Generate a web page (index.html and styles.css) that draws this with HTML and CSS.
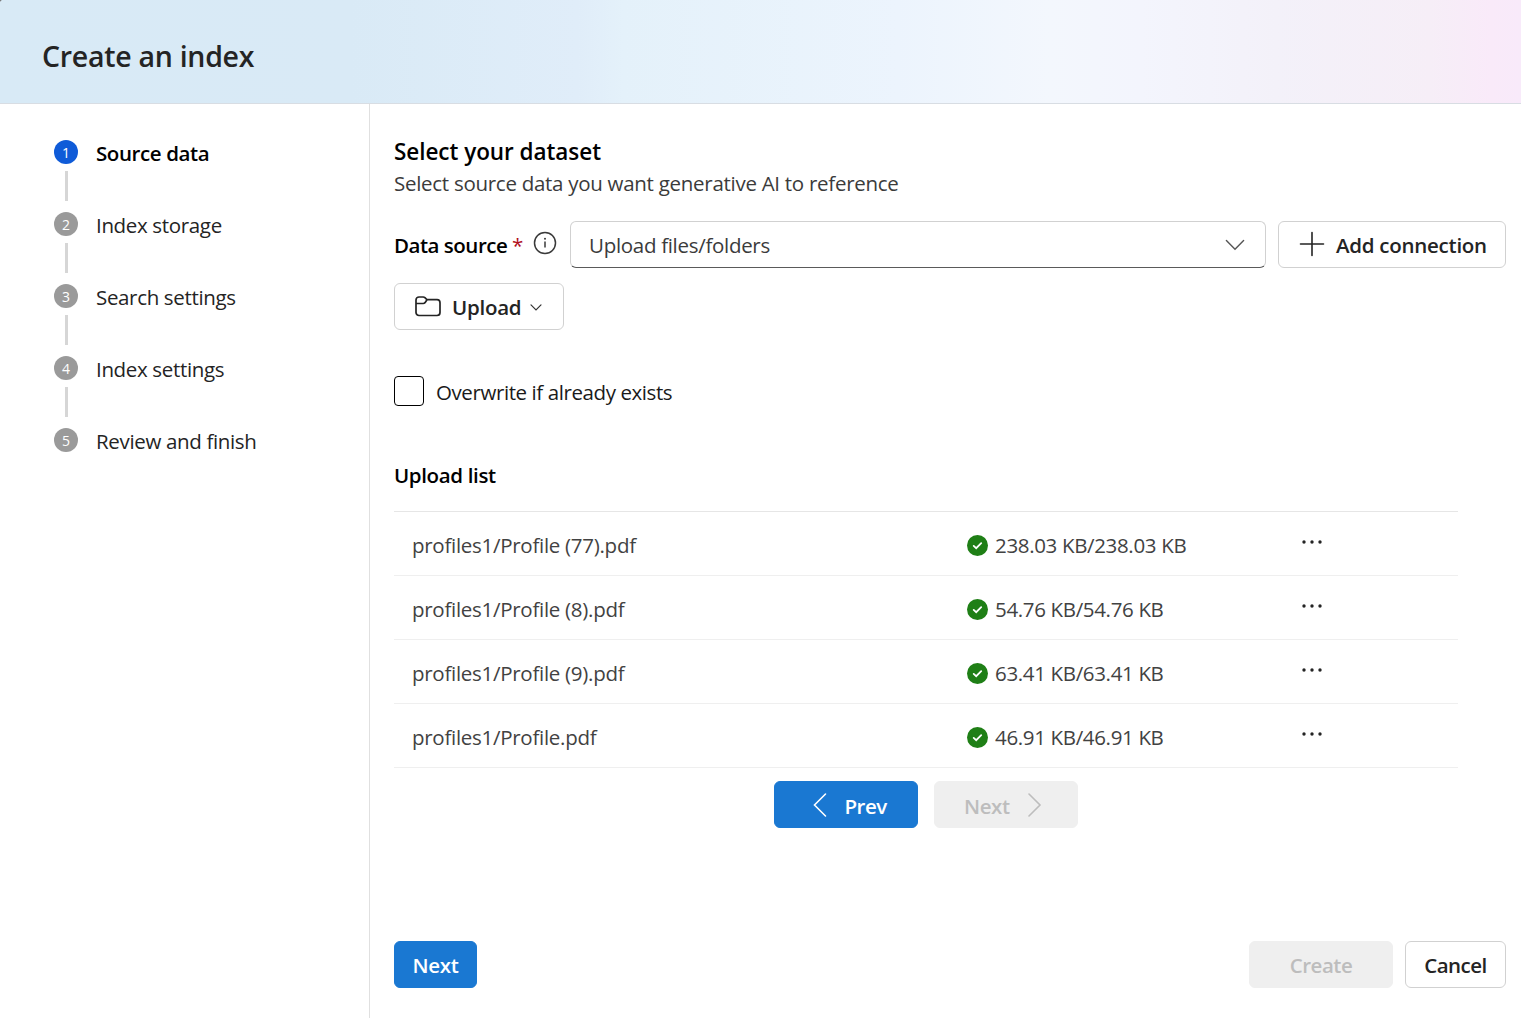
FILE: index.html
```html
<!DOCTYPE html>
<html lang="en">
<head>
<meta charset="utf-8">
<title>Create an index</title>
<link rel="stylesheet" href="styles.css">
</head>
<body>
<header class="header"><h1 class="title">Create an index</h1></header>
<div class="body">
  <nav class="steps">
    <div class="step active"><div class="rail"><span class="dot">1</span><i class="line"></i></div><span class="step-name">Source data</span></div>
    <div class="step"><div class="rail"><span class="dot">2</span><i class="line"></i></div><span class="step-name">Index storage</span></div>
    <div class="step"><div class="rail"><span class="dot">3</span><i class="line"></i></div><span class="step-name">Search settings</span></div>
    <div class="step"><div class="rail"><span class="dot">4</span><i class="line"></i></div><span class="step-name">Index settings</span></div>
    <div class="step"><div class="rail"><span class="dot">5</span></div><span class="step-name">Review and finish</span></div>
  </nav>
  <main class="main">
    <h2 class="heading">Select your dataset</h2>
    <p class="sub">Select source data you want generative AI to reference</p>
    <div class="source">
      <label class="label">Data source</label><span class="req">*</span>
      <svg class="info" width="24" height="24" viewBox="0 0 24 24" fill="none" stroke="#3a3a3a" stroke-width="1.5"><circle cx="12" cy="12" r="10.5"/><path d="M12 10.5v6"/><circle cx="12" cy="7.8" r="1" fill="#3a3a3a" stroke="none"/></svg>
      <div class="select"><span>Upload files/folders</span><svg width="20" height="12" viewBox="0 0 20 12" fill="none" stroke="#555" stroke-width="1.4" stroke-linecap="round"><path d="M1.4 1.6 10 10.2l8.6-8.6"/></svg></div>
      <button class="btn add"><svg width="26" height="26" viewBox="0 0 26 26" stroke="#242424" stroke-width="1.6" stroke-linecap="round"><path d="M13 1.5v23M1.5 13h23"/></svg><span>Add connection</span></button>
    </div>
    <button class="btn upload"><svg width="28" height="22" viewBox="0 0 28 22" fill="none" stroke="#242424" stroke-width="1.7" stroke-linejoin="round"><path d="M2 4a3 3 0 0 1 3-3h4.2a2.5 2.5 0 0 1 1.700.7l2 2H23a3 3 0 0 1 3 3V16.500a3 3 0 0 1-3 3H5a3 3 0 0 1-3-3zM2 7.500h7.200a2.500 2.500 0 0 0 1.800-.8l2-3"/></svg><span>Upload</span><svg class="mini" width="12" height="8" viewBox="0 0 12 8" fill="none" stroke="#333" stroke-width="1.2" stroke-linecap="round"><path d="M1 1.800 6 6.800l5-5"/></svg></button>
    <label class="check"><i class="box"></i><span>Overwrite if already exists</span></label>
    <h3 class="list-title">Upload list</h3>
    <div class="table">
      <div class="row"><span class="file">profiles1/Profile (77).pdf</span><svg class="ok" width="22" height="22" viewBox="0 0 22 22"><circle cx="11.5" cy="11.5" r="10.5" fill="#1f7f16"/><path d="m7.700 11.900 2.500 2.300 5-5" fill="none" stroke="#fff" stroke-width="1.8" stroke-linecap="round"/></svg><span class="size">238.03 KB/238.03 KB</span><svg class="more" width="20" height="4" viewBox="0 0 20 4" fill="#242424"><circle cx="2" cy="2" r="1.7"/><circle cx="10" cy="2" r="1.7"/><circle cx="18" cy="2" r="1.7"/></svg></div>
      <div class="row"><span class="file">profiles1/Profile (8).pdf</span><svg class="ok" width="22" height="22" viewBox="0 0 22 22"><circle cx="11.5" cy="11.5" r="10.5" fill="#1f7f16"/><path d="m7.700 11.900 2.500 2.300 5-5" fill="none" stroke="#fff" stroke-width="1.8" stroke-linecap="round"/></svg><span class="size">54.76 KB/54.76 KB</span><svg class="more" width="20" height="4" viewBox="0 0 20 4" fill="#242424"><circle cx="2" cy="2" r="1.7"/><circle cx="10" cy="2" r="1.7"/><circle cx="18" cy="2" r="1.7"/></svg></div>
      <div class="row"><span class="file">profiles1/Profile (9).pdf</span><svg class="ok" width="22" height="22" viewBox="0 0 22 22"><circle cx="11.5" cy="11.5" r="10.5" fill="#1f7f16"/><path d="m7.700 11.900 2.500 2.300 5-5" fill="none" stroke="#fff" stroke-width="1.8" stroke-linecap="round"/></svg><span class="size">63.41 KB/63.41 KB</span><svg class="more" width="20" height="4" viewBox="0 0 20 4" fill="#242424"><circle cx="2" cy="2" r="1.7"/><circle cx="10" cy="2" r="1.7"/><circle cx="18" cy="2" r="1.7"/></svg></div>
      <div class="row"><span class="file">profiles1/Profile.pdf</span><svg class="ok" width="22" height="22" viewBox="0 0 22 22"><circle cx="11.5" cy="11.5" r="10.5" fill="#1f7f16"/><path d="m7.700 11.900 2.500 2.300 5-5" fill="none" stroke="#fff" stroke-width="1.8" stroke-linecap="round"/></svg><span class="size">46.91 KB/46.91 KB</span><svg class="more" width="20" height="4" viewBox="0 0 20 4" fill="#242424"><circle cx="2" cy="2" r="1.7"/><circle cx="10" cy="2" r="1.7"/><circle cx="18" cy="2" r="1.7"/></svg></div>
    </div>
    <div class="pager">
      <button class="btn primary prev"><svg width="14" height="26" viewBox="0 0 14 26" fill="none" stroke="#fff" stroke-width="1.6" stroke-linecap="round"><path d="M12.500 2 1.500 13l11 11"/></svg><span>Prev</span></button>
      <button class="btn disabled next"><span>Next</span><svg width="14" height="26" viewBox="0 0 14 26" fill="none" stroke="#bdbdbd" stroke-width="1.6" stroke-linecap="round"><path d="m1 2 11 11L1 24"/></svg></button>
    </div>
    <footer class="footer">
      <button class="btn primary go"><span>Next</span></button>
      <button class="btn disabled create"><span>Create</span></button>
      <button class="btn cancel"><span>Cancel</span></button>
    </footer>
  </main>
</div>
</body>
</html>
```
FILE: styles.css
```css
* { box-sizing: border-box; }
body { margin: 0; width: 1521px; height: 1018px; overflow: hidden; display: flex; flex-direction: column; background: #fff; color: #242424; font: 400 20.5px/30px "Open Sans", "Noto Sans", sans-serif; letter-spacing: -0.34px; }
h1, h2, h3, p { margin: 0; }
.header { height: 104px; padding: 35px 42px 0; border-bottom: 1px solid #d8dde3; background: radial-gradient(circle at 4px 4px, transparent 4px, #777 5px) 0 0 / 3px 3px no-repeat, linear-gradient(90deg, #d8eaf6 0%, #d9eaf6 23%, #e0edf9 38%, #e4f1fa 41%, #ecf4fd 59%, #f3f7fd 69%, #f3f5fd 75%, #f3f1f9 84%, #f6eef7 94%, #f9eaf9 98%, #f8eafa 100%); }
.title { font-size: 28.5px; line-height: 42px; font-weight: 600; letter-spacing: -0.28px; }
.body { flex: 1; display: flex; }
.steps { width: 370px; padding: 36px 0 0 54px; border-right: 1px solid #e0e0e0; }
.step { display: flex; height: 72px; gap: 18px; }
.step-name { line-height: 26px; }
.rail { width: 24px; display: flex; flex-direction: column; align-items: center; }
.dot { width: 24px; height: 24px; border-radius: 50%; background: #9a9a9a; color: #fff; font-size: 14px; line-height: 25px; text-align: center; letter-spacing: 0; }
.active .dot { background: #0f5bd8; }
.line { width: 3px; height: 30px; margin: 7px 0 0 1px; background: #d6d6d6; }
.active .step-name { font-weight: 600; color: #000; letter-spacing: -0.4px; }
.main { flex: 1; padding: 32px 15px 30px 24px; display: flex; flex-direction: column; align-items: flex-start; }
.heading { font-size: 22.5px; line-height: 32px; font-weight: 600; color: #000; letter-spacing: -0.05px; }
.sub { line-height: 30px; color: #3b3b3b; letter-spacing: -0.28px; }
.source { display: flex; align-items: center; width: 1112px; height: 47px; margin-top: 23px; }
.label { width: 118px; font-weight: 600; color: #000; letter-spacing: -0.48px; }
.req { width: 21px; color: #b10e1c; }
.info { margin-bottom: 3px; }
.select { display: flex; align-items: center; justify-content: space-between; width: 696px; height: 47px; margin-left: 13px; padding: 0 20px 0 18px; border: 1px solid #d1d1d1; border-bottom-color: #5a5a5a; border-radius: 6px; color: #3b3b3b; letter-spacing: -0.3px; }
.btn { display: flex; align-items: center; height: 47px; padding: 0; border: 1px solid #d1d1d1; border-radius: 6px; background: #fff; color: #242424; font: 600 20.5px/30px "Open Sans", "Noto Sans", sans-serif; letter-spacing: -0.26px; }
.add { width: 228px; margin-left: 12px; padding-left: 20px; gap: 11px; }
.add svg { margin-bottom: 1px; }
.upload { width: 170px; margin-top: 15px; padding-left: 19px; gap: 10px; }
.mini { margin-left: -1px; }
.check { display: flex; height: 30px; margin-top: 46px; gap: 12px; color: #1a1a1a; letter-spacing: -0.41px; }
.check span { padding-top: 1px; }
.box { width: 30px; height: 30px; border: 1px solid #000; border-radius: 4px; }
.list-title { margin-top: 54px; font-size: 20.5px; line-height: 30px; font-weight: 600; color: #000; letter-spacing: -0.36px; }
.table { width: 1064px; margin-top: 21px; border-top: 1px solid #e6e6e6; }
.row { display: flex; align-items: center; height: 64px; padding: 3px 0 0 18px; border-bottom: 1px solid #efefef; color: #424242; }
.file { width: 554px; letter-spacing: -0.28px; }
.ok { margin-right: 7px; overflow: visible; }
.size { width: 307px; }
.more { margin-bottom: 6px; }
.pager { display: flex; gap: 16px; margin: 13px 0 0 380px; }
.pager span { padding-top: 2px; }
.primary { background: #1a78d2; border-color: #1a78d2; color: #fff; }
.disabled { background: #efefef; border-color: #efefef; color: #bdbdbd; }
.prev, .next, .create { width: 144px; }
.prev { padding-left: 38px; gap: 17.5px; letter-spacing: -0.5px; }
.next { padding-left: 29px; gap: 18px; letter-spacing: -0.4px; }
.footer { display: flex; width: 1112px; margin-top: auto; }
.go, .create, .cancel { justify-content: center; }
.go { width: 83px; margin-right: auto; }
.create, .cancel { letter-spacing: -0.5px; }
.cancel { width: 101px; margin-left: 12px; }
```
